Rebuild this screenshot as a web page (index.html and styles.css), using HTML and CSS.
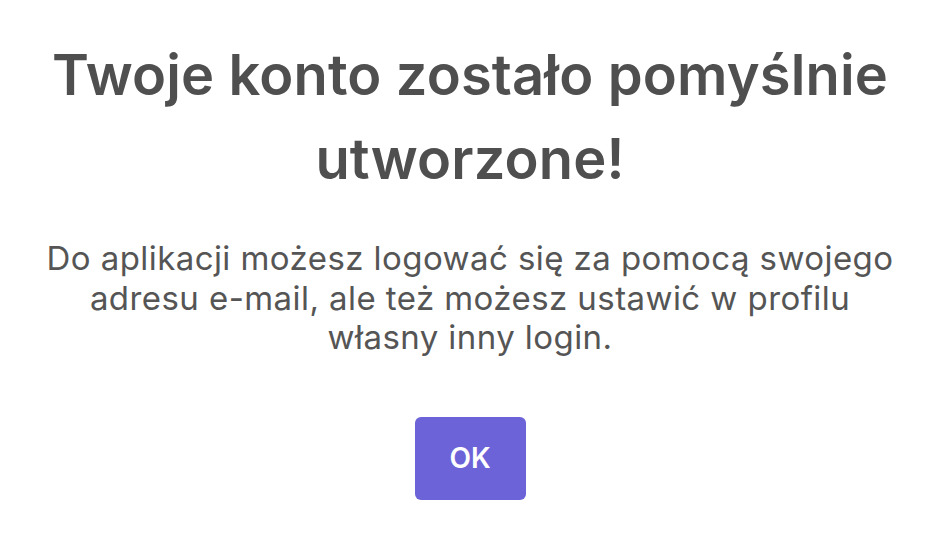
FILE: index.html
```html
<!DOCTYPE html>
<html lang="pl">
<head>
<meta charset="utf-8">
<link rel="stylesheet" href="styles.css">
</head>
<body>
<main class="dialog">
  <h1 class="title">Twoje konto zostało pomyślnie utworzone!</h1>
  <p class="message">Do aplikacji możesz logować się za pomocą swojego adresu e-mail, ale też możesz ustawić w profilu własny inny login.</p>
  <button class="ok-btn" type="button">OK</button>
</main>
</body>
</html>
```
FILE: styles.css
```css
html, body {
  margin: 0;
  padding: 0;
  background: #ffffff;
}
body {
  font-family: Inter, "Noto Sans", sans-serif;
  width: 945px;
  height: 540px;
  overflow: hidden;
}
.dialog {
  display: flex;
  flex-direction: column;
  align-items: center;
  padding: 33px 5px 0 0;
  text-align: center;
}
.title {
  margin: 0;
  width: 900px;
  font-size: 56px;
  line-height: 84px;
  font-weight: 600;
  letter-spacing: 0.15px;
  color: #4f4f4f;
}
.message {
  margin: 38px 0 0;
  width: 860px;
  font-size: 33px;
  line-height: 39.5px;
  font-weight: 400;
  letter-spacing: 0.43px;
  color: #555555;
}
.ok-btn {
  margin-top: 59px;
  width: 111px;
  height: 83px;
  border: none;
  border-radius: 6px;
  background: #6c63d8;
  color: #ffffff;
  font-family: Inter, "Noto Sans", sans-serif;
  font-size: 28px;
  font-weight: 600;
  cursor: pointer;
}
```
